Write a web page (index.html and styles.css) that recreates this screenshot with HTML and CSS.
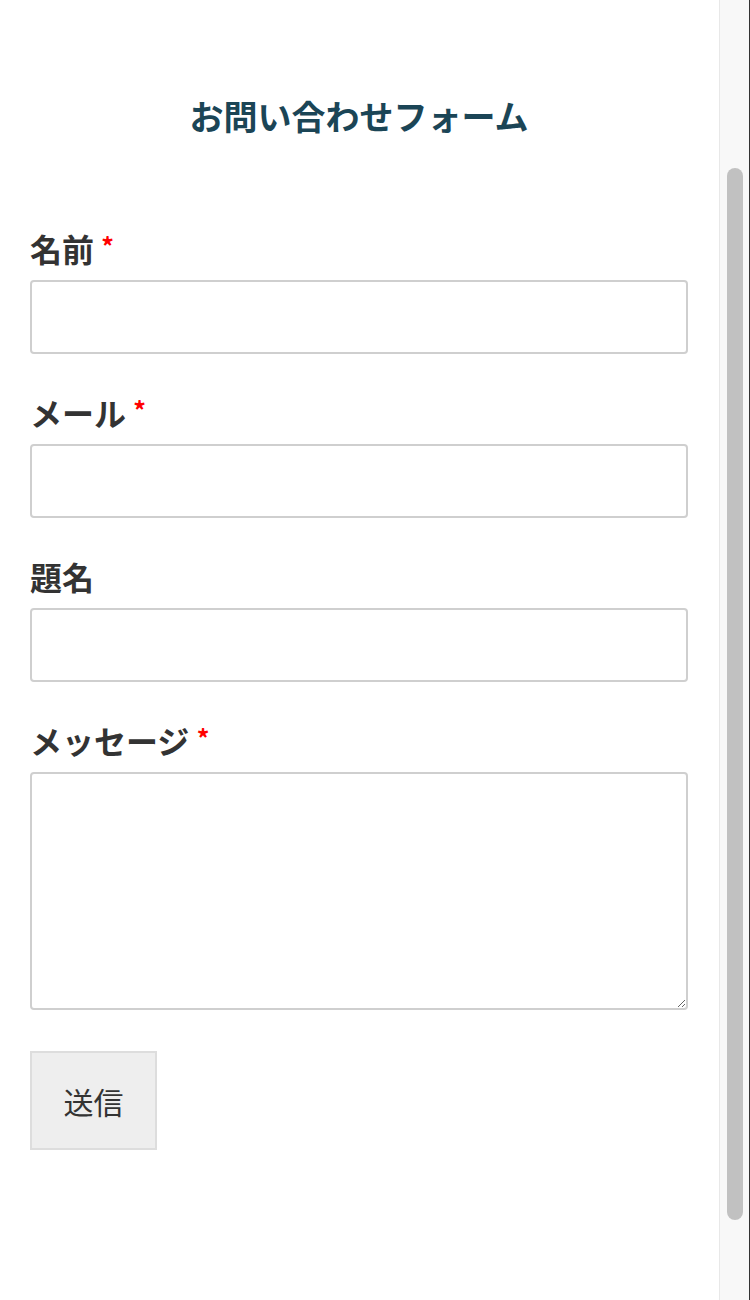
FILE: index.html
```html
<!DOCTYPE html>
<html lang="ja">
<head>
<meta charset="utf-8">
<title>お問い合わせフォーム</title>
<link rel="stylesheet" href="styles.css">
</head>
<body>
<div class="window">
  <main class="page">
    <h1 class="title">お問い合わせフォーム</h1>
    <form class="form">
      <div class="field">
        <label class="label">名前 <span class="req">*</span></label>
        <input class="input" type="text">
      </div>
      <div class="field">
        <label class="label">メール <span class="req">*</span></label>
        <input class="input" type="email">
      </div>
      <div class="field">
        <label class="label">題名</label>
        <input class="input" type="text">
      </div>
      <div class="field">
        <label class="label">メッセージ <span class="req">*</span></label>
        <textarea class="textarea"></textarea>
      </div>
      <button class="submit" type="button">送信</button>
    </form>
  </main>
  <div class="scrollbar"><div class="thumb"></div></div>
</div>
</body>
</html>
```
FILE: styles.css
```css
html, body {
  margin: 0;
  padding: 0;
  background: #fff;
}
body {
  font-family: "Noto Sans CJK JP", "Noto Sans", sans-serif;
  color: #333;
}
.window {
  display: flex;
  width: 750px;
  height: 1300px;
  overflow: hidden;
}
.page {
  flex: 1;
  padding: 92px 31px 0 30px;
  box-sizing: border-box;
}
.title {
  margin: 0;
  text-align: center;
  font-size: 34px;
  line-height: 48px;
  font-weight: 700;
  color: #1b4556;
}
.form {
  margin-top: 91px;
  display: flex;
  flex-direction: column;
}
.field {
  display: flex;
  flex-direction: column;
  margin-bottom: 41px;
}
.label {
  display: block;
  font-size: 32px;
  line-height: 34px;
  height: 34px;
  font-weight: 700;
  color: #333;
  margin-bottom: 15px;
  white-space: nowrap;
}
.req {
  color: #f00;
  font-size: 25px;
  line-height: 0;
  vertical-align: 6px;
}
.input, .textarea {
  box-sizing: border-box;
  width: 100%;
  border: 2px solid #cfcfcf;
  border-radius: 4px;
  background: #fff;
  margin: 0;
  font: inherit;
  display: block;
}
.input {
  height: 74px;
}
.textarea {
  height: 238px;
  resize: vertical;
}
.submit {
  align-self: flex-start;
  width: 127px;
  height: 99px;
  margin-top: 0;
  background: #eee;
  border: 2px solid #ddd;
  border-radius: 0;
  font-family: "Noto Sans CJK JP", sans-serif;
  font-size: 30px;
  color: #333;
  padding: 0;
}
.scrollbar {
  width: 31px;
  height: 1300px;
  box-sizing: border-box;
  background: #f8f8f8;
  border-left: 1px solid #e8e8e8;
  border-right: 1px solid #333;
  padding: 168px 5px 0 7px;
}
.thumb {
  width: 16px;
  height: 1052px;
  border-radius: 8px;
  background: #c1c1c1;
}
```
